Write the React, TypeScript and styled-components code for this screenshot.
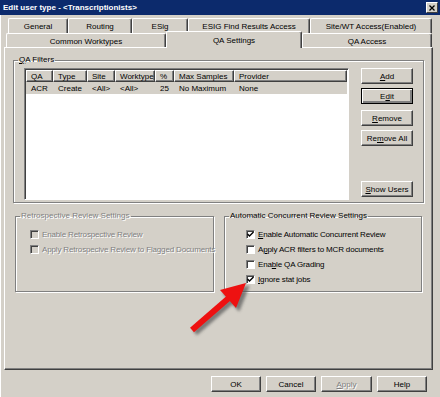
import styled, { createGlobalStyle } from "styled-components";

const GlobalStyle = createGlobalStyle`
  html, body {
    margin: 0;
    padding: 0;
    background: #d4d0c8;
  }
  body {
    font-family: "Liberation Sans", Arial, sans-serif;
    font-size: 8px;
    color: #000;
  }
`;

const Window = styled.div`
  position: relative;
  width: 440px;
  height: 397px;
  background: #d4d0c8;
  overflow: hidden;
  display: flex;
  flex-direction: column;
  box-shadow: inset 1px 0 0 #fff;
`;

const TitleBar = styled.div`
  height: 15px;
  background: #0c2a6c;
  display: flex;
  align-items: center;
  justify-content: space-between;
  padding: 0 2px 0 3px;
  color: #fff;
  font-weight: bold;
  font-size: 8px;
`;

const CloseBox = styled.div`
  width: 10px;
  height: 9px;
  background: #d4d0c8;
  border: 1px solid;
  border-color: #fff #404040 #404040 #fff;
  display: flex;
  align-items: center;
  justify-content: center;
`;

const Body = styled.div`
  display: flex;
  flex-direction: column;
  padding: 3px 7px 0 4px;
`;

const TabRows = styled.div`
  display: flex;
  flex-direction: column;
  height: 29px;
`;

const TabRow = styled.div<{ $indent: number; $h: number }>`
  display: flex;
  height: ${(p) => p.$h}px;
  margin-left: ${(p) => p.$indent}px;
`;

const Tab = styled.div<{ $w: number; $active?: boolean }>`
  width: ${(p) => p.$w}px;
  box-sizing: border-box;
  display: flex;
  align-items: center;
  justify-content: center;
  background: #d4d0c8;
  border-top: 1px solid #fff;
  border-left: 1px solid #fff;
  border-right: 1px solid #404040;
  box-shadow: inset -1px 0 0 #808080;
  border-radius: 2px 2px 0 0;
  position: relative;
  z-index: ${(p) => (p.$active ? 2 : 1)};
  margin-top: ${(p) => (p.$active ? -2 : 0)}px;
  margin-bottom: ${(p) => (p.$active ? -1 : 0)}px;
  padding-top: ${(p) => (p.$active ? 0 : 1)}px;
  white-space: nowrap;
`;

const Panel = styled.div`
  height: 323px;
  width: 429px;
  box-sizing: border-box;
  border-top: 1px solid #fff;
  border-left: 1px solid #fff;
  border-right: 1px solid #404040;
  border-bottom: 1px solid #404040;
  box-shadow: inset -1px -1px 0 #808080;
  padding: 7px 0 0 8px;
  display: flex;
  flex-direction: column;
`;

const Group = styled.fieldset<{ $w: number; $h: number }>`
  margin: 0;
  padding: 0;
  min-inline-size: 0;
  width: ${(p) => p.$w}px;
  height: ${(p) => p.$h}px;
  box-sizing: border-box;
  border: 1px solid #808080;
  box-shadow: 1px 1px 0 #fff, inset 1px 1px 0 #fff;
`;

const Legend = styled.legend<{ $disabled?: boolean }>`
  margin-left: 4px;
  padding: 0 1px;
  line-height: 10px;
  font-size: 8px;
  white-space: nowrap;
  color: ${(p) => (p.$disabled ? "#808080" : "#000")};
  text-shadow: ${(p) => (p.$disabled ? "1px 1px 0 #fff" : "none")};
`;

const FilterContent = styled.div`
  display: flex;
  padding: 3px 0 0 10px;
`;

const List = styled.div`
  width: 325px;
  height: 132px;
  box-sizing: border-box;
  background: #fff;
  border: 1px solid;
  border-color: #808080 #fff #fff #808080;
  box-shadow: inset 1px 1px 0 #404040;
  padding: 1px 0 0 1px;
`;

const Row = styled.div<{ $header?: boolean; $selected?: boolean }>`
  display: flex;
  height: 12px;
  width: 321px;
  background: ${(p) => (p.$header || p.$selected ? "#d4d0c8" : "transparent")};
`;

const Cell = styled.div<{ $w: number; $header?: boolean }>`
  width: ${(p) => p.$w}px;
  flex: none;
  box-sizing: border-box;
  display: flex;
  align-items: center;
  padding-left: 5px;
  white-space: nowrap;
  overflow: hidden;
  ${(p) =>
    p.$header &&
    `
    border: 1px solid;
    border-color: #fff #404040 #404040 #fff;
    box-shadow: inset -1px -1px 0 #808080;
    padding-left: 4px;
  `}
`;

const ButtonColumn = styled.div`
  display: flex;
  flex-direction: column;
  margin-left: 12px;
  height: 132px;
`;

const Button = styled.div<{
  $w: number;
  $mt?: number;
  $default?: boolean;
  $disabled?: boolean;
}>`
  width: ${(p) => p.$w}px;
  height: 16px;
  box-sizing: border-box;
  margin-top: ${(p) => p.$mt ?? 0}px;
  background: #d4d0c8;
  border: 1px solid;
  border-color: ${(p) =>
    p.$default ? "#000" : "#fff #404040 #404040 #fff"};
  box-shadow: ${(p) =>
    p.$default
      ? "inset 1px 1px 0 #fff, inset -2px -2px 0 #808080"
      : "inset -1px -1px 0 #808080"};
  display: flex;
  align-items: center;
  justify-content: center;
  white-space: nowrap;
  color: ${(p) => (p.$disabled ? "#808080" : "#000")};
  text-shadow: ${(p) => (p.$disabled ? "1px 1px 0 #fff" : "none")};
  flex: none;
`;

const BottomRow = styled.div`
  display: flex;
  gap: 10px;
  margin-top: 8px;
  padding-left: 2px;
`;

const CheckList = styled.div<{ $pad: number }>`
  display: flex;
  flex-direction: column;
  padding: 6px 0 0 ${(p) => p.$pad}px;
`;

const CheckRow = styled.div<{ $disabled?: boolean }>`
  display: flex;
  align-items: center;
  height: 15px;
  gap: 3px;
  white-space: nowrap;
  letter-spacing: -0.15px;
  color: ${(p) => (p.$disabled ? "#808080" : "#000")};
  text-shadow: ${(p) => (p.$disabled ? "1px 1px 0 #fff" : "none")};
`;

const Box = styled.div<{ $disabled?: boolean }>`
  width: 9px;
  height: 9px;
  flex: none;
  box-sizing: border-box;
  background: ${(p) => (p.$disabled ? "#d4d0c8" : "#fff")};
  border: 1px solid;
  border-color: #808080 #fff #fff #808080;
  box-shadow: inset 1px 1px 0 #404040;
  display: flex;
  align-items: center;
  justify-content: center;
`;

const Footer = styled.div`
  display: flex;
  justify-content: flex-end;
  gap: 5px;
  padding: 6px 6px 0 0;
`;

const Arrow = styled.svg`
  position: absolute;
  left: 0;
  top: 0;
  pointer-events: none;
`;

const U = styled.span`
  text-decoration: underline;
`;

const columns = [
  { name: "QA", w: 27, v: "ACR" },
  { name: "Type", w: 34, v: "Create" },
  { name: "Site", w: 28, v: "<All>" },
  { name: "Worktype", w: 40, v: "<All>" },
  { name: "%", w: 19, v: "25" },
  { name: "Max Samples", w: 60, v: "No Maximum" },
  { name: "Provider", w: 113, v: "None" },
];

const acr = [
  { pre: "", u: "E", post: "nable Automatic Concurrent Review", on: true },
  { pre: "A", u: "p", post: "ply ACR filters to MCR documents", on: false },
  { pre: "Ena", u: "b", post: "le QA Grading", on: false },
  { pre: "", u: "I", post: "gnore stat jobs", on: true },
];

function Check({ on }: { on: boolean }) {
  return on ? (
    <svg width="7" height="7" viewBox="0 0 7 7">
      <path d="M0.5 3 L2.5 5 L6.5 1" stroke="#000" strokeWidth="1.4" fill="none" />
    </svg>
  ) : null;
}

export default function App() {
  return (
    <>
      <GlobalStyle />
      <Window>
        <TitleBar>
          <span>Edit user type - &lt;Transcriptionists&gt;</span>
          <CloseBox>
            <svg width="6" height="6" viewBox="0 0 6 6">
              <path d="M0.5 0.5 L5.5 5.5 M5.5 0.5 L0.5 5.5" stroke="#000" strokeWidth="1.3" />
            </svg>
          </CloseBox>
        </TitleBar>
        <Body>
          <TabRows>
            <TabRow $indent={4} $h={15}>
              <Tab $w={60}>General</Tab>
              <Tab $w={64}>Routing</Tab>
              <Tab $w={56}>ESig</Tab>
              <Tab $w={122}>ESIG Find Results Access</Tab>
              <Tab $w={122}>Site/WT Access(Enabled)</Tab>
            </TabRow>
            <TabRow $indent={2} $h={14}>
              <Tab $w={160}>Common Worktypes</Tab>
              <Tab $w={136} $active>
                QA Settings
              </Tab>
              <Tab $w={130}>QA Access</Tab>
            </TabRow>
          </TabRows>
          <Panel>
            <Group $w={411} $h={148}>
              <Legend>
                <U>Q</U>A Filters
              </Legend>
              <FilterContent>
                <List>
                  <Row $header>
                    {columns.map((c) => (
                      <Cell key={c.name} $w={c.w} $header>
                        {c.name}
                      </Cell>
                    ))}
                  </Row>
                  <Row $selected>
                    {columns.map((c) => (
                      <Cell key={c.name} $w={c.w}>
                        {c.v}
                      </Cell>
                    ))}
                  </Row>
                </List>
                <ButtonColumn>
                  <Button $w={52}>
                    <U>A</U>dd
                  </Button>
                  <Button $w={52} $mt={4} $default>
                    E<U>d</U>it
                  </Button>
                  <Button $w={52} $mt={6}>
                    <U>R</U>emove
                  </Button>
                  <Button $w={52} $mt={4}>
                    Re<U>m</U>ove All
                  </Button>
                  <Button $w={52} $mt={35}>
                    <U>S</U>how Users
                  </Button>
                </ButtonColumn>
              </FilterContent>
            </Group>
            <BottomRow>
              <Group $w={199} $h={81}>
                <Legend $disabled>Retrospective Review Settings</Legend>
                <CheckList $pad={14}>
                  <CheckRow $disabled>
                    <Box $disabled />
                    Enable Retrospective Review
                  </CheckRow>
                  <CheckRow $disabled>
                    <Box $disabled />
                    Apply Retrospecive Review to Flagged Documents
                  </CheckRow>
                </CheckList>
              </Group>
              <Group $w={198} $h={81}>
                <Legend>Automatic Concurrent Review Settings</Legend>
                <CheckList $pad={21}>
                  {acr.map((r) => (
                    <CheckRow key={r.post}>
                      <Box>
                        <Check on={r.on} />
                      </Box>
                      <span>
                        {r.pre}
                        <U>{r.u}</U>
                        {r.post}
                      </span>
                    </CheckRow>
                  ))}
                </CheckList>
              </Group>
            </BottomRow>
          </Panel>
          <Footer>
            <Button $w={50}>OK</Button>
            <Button $w={50}>Cancel</Button>
            <Button $w={51} $disabled>
              <U>A</U>pply
            </Button>
            <Button $w={50}>Help</Button>
          </Footer>
        </Body>
        <Arrow width="440" height="397" viewBox="0 0 440 397">
          <defs>
            <filter id="sh" x="-20%" y="-20%" width="140%" height="140%">
              <feGaussianBlur stdDeviation="1.6" />
            </filter>
          </defs>
          <g transform="translate(3 3)" fill="#555" stroke="#555" filter="url(#sh)" opacity="0.7">
            <line x1="192" y1="330" x2="230" y2="297" strokeWidth="6" />
            <polygon points="246,283 236,308 220,290" />
          </g>
          <g fill="#ee1111" stroke="#ee1111">
            <line x1="192" y1="330" x2="230" y2="297" strokeWidth="6" />
            <polygon points="246,283 236,308 220,290" strokeWidth="0" />
          </g>
        </Arrow>
      </Window>
    </>
  );
}
